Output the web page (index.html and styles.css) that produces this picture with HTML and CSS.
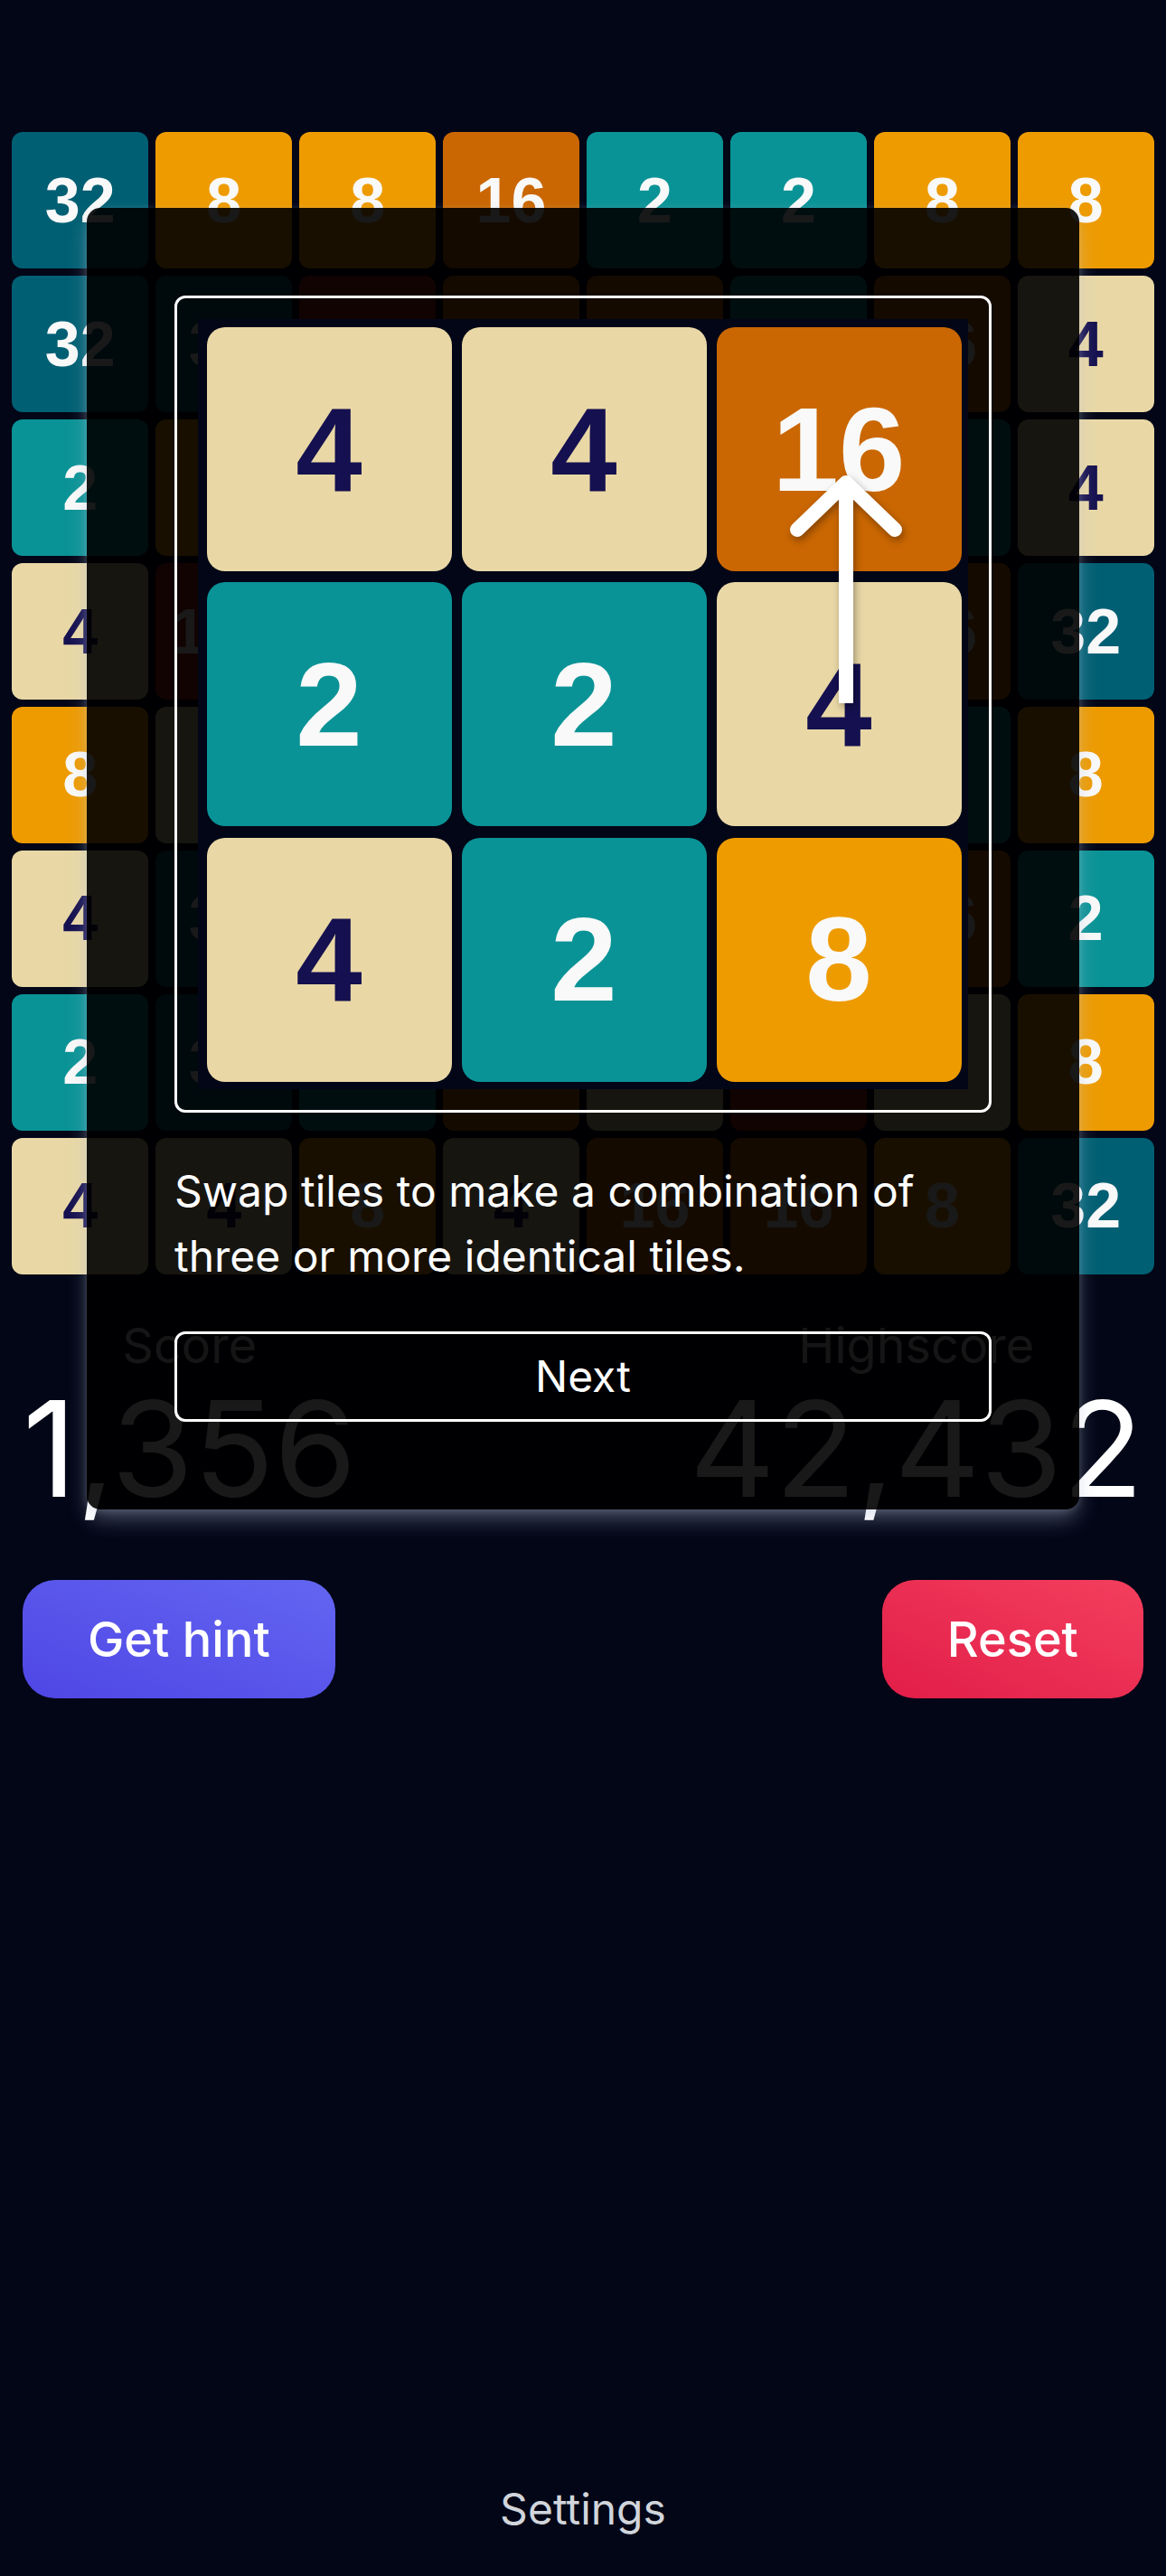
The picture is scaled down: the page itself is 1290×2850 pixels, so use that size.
FILE: index.html
```html
<!DOCTYPE html>
<html lang="en">
<head>
<meta charset="utf-8">
<title>Tiles</title>
<link rel="stylesheet" href="styles.css">
</head>
<body>
<div class="page">
  <div class="board">
    <div class="tile t32">32</div><div class="tile t8">8</div><div class="tile t8">8</div><div class="tile t16">16</div><div class="tile t2">2</div><div class="tile t2">2</div><div class="tile t8">8</div><div class="tile t8">8</div>
    <div class="tile t32">32</div><div class="tile t32">32</div><div class="tile t128">128</div><div class="tile t16">16</div><div class="tile t16">16</div><div class="tile t2">2</div><div class="tile t16">16</div><div class="tile t4">4</div>
    <div class="tile t2">2</div><div class="tile t8">8</div><div class="tile t4">4</div><div class="tile t2">2</div><div class="tile t4">4</div><div class="tile t8">8</div><div class="tile t2">2</div><div class="tile t4">4</div>
    <div class="tile t4">4</div><div class="tile t128">128</div><div class="tile t2">2</div><div class="tile t4">4</div><div class="tile t8">8</div><div class="tile t2">2</div><div class="tile t16">16</div><div class="tile t32">32</div>
    <div class="tile t8">8</div><div class="tile t4">4</div><div class="tile t2">2</div><div class="tile t8">8</div><div class="tile t4">4</div><div class="tile t2">2</div><div class="tile t2">2</div><div class="tile t8">8</div>
    <div class="tile t4">4</div><div class="tile t32">32</div><div class="tile t8">8</div><div class="tile t4">4</div><div class="tile t2">2</div><div class="tile t4">4</div><div class="tile t16">16</div><div class="tile t2">2</div>
    <div class="tile t2">2</div><div class="tile t32">32</div><div class="tile t2">2</div><div class="tile t16">16</div><div class="tile t4">4</div><div class="tile t128">128</div><div class="tile t4">4</div><div class="tile t8">8</div>
    <div class="tile t4">4</div><div class="tile t4">4</div><div class="tile t8">8</div><div class="tile t4">4</div><div class="tile t16">16</div><div class="tile t16">16</div><div class="tile t8">8</div><div class="tile t32">32</div>
  </div>

  <div class="scores">
    <div class="score">
      <div class="score-label">Score</div>
      <div class="score-value">1,356</div>
    </div>
    <div class="score">
      <div class="score-label">Highscore</div>
      <div class="score-value">42,432</div>
    </div>
  </div>

  <div class="actions">
    <button class="btn btn-hint">Get hint</button>
    <button class="btn btn-reset">Reset</button>
  </div>

  <button class="settings">Settings</button>

  <div class="tour">
    <div class="shot-frame">
      <div class="shot">
        <div class="tile t4">4</div><div class="tile t4">4</div><div class="tile t16">16</div>
        <div class="tile t2">2</div><div class="tile t2">2</div><div class="tile t4">4</div>
        <div class="tile t4">4</div><div class="tile t2">2</div><div class="tile t8">8</div>
        <svg class="arrow" width="852" height="852" viewBox="0 0 852 852" aria-hidden="true">
          <path d="M717 425 V186" fill="none" stroke="#fff" stroke-width="16"/>
          <path d="M663 233 L717 181 L771 233" fill="none" stroke="#fff" stroke-width="16" stroke-linecap="round" stroke-linejoin="round"/>
        </svg>
      </div>
    </div>
    <p class="tour-text">Swap tiles to make a combination of three or more identical tiles.</p>
    <button class="tour-next">Next</button>
  </div>
</div>
</body>
</html>
```

FILE: styles.css
```css
* { box-sizing: border-box; }
html, body { margin: 0; padding: 0; }
body {
  background: #020617;
  color: #fff;
  font-family: Inter, "Noto Sans", sans-serif;
}
.page {
  position: relative;
  min-height: 2850px;
  display: flex;
  flex-direction: column;
  padding: 146px 0 38px;
}
.board {
  display: grid;
  grid-template-columns: repeat(8, 1fr);
  gap: 7.5px;
  margin: 0 13px;
}
.tile {
  aspect-ratio: 1;
  border-radius: 12px;
  display: flex;
  align-items: center;
  justify-content: center;
  font-family: "Liberation Sans", Arial, sans-serif;
  font-weight: 700;
  font-size: 70px;
  color: #f9f9f9;
}
.t2 { background: #0a9396; }
.t4 { background: #e9d8a6; color: #15104f; }
.t8 { background: #ee9b00; }
.t16 { background: #ca6702; }
.t32 { background: #005f73; }
.t128 { background: #ae2012; }

.scores {
  display: flex;
  justify-content: space-between;
  padding: 0 25px;
  margin-top: 38px;
}
.score {
  display: flex;
  flex-direction: column;
  align-items: center;
}
.score-label {
  font-size: 54px;
  line-height: 81px;
  color: #d1d5db;
}
.score-value {
  font-size: 147px;
  line-height: 144px;
  margin-top: 2px;
}
.actions {
  display: flex;
  justify-content: space-between;
  padding: 0 25px;
  margin-top: 73px;
}
.btn {
  border: 0;
  border-radius: 36px;
  color: #fff;
  font-family: Inter, "Noto Sans", sans-serif;
  font-size: 54px;
  font-weight: 500;
  line-height: 81px;
  padding: 25px 72px;
}
.btn-hint { background: linear-gradient(to top right, #4f46e5, #6366f1); }
.btn-reset { background: linear-gradient(to top right, #e11d48, #f43f5e); }
.settings {
  margin-top: auto;
  align-self: center;
  background: none;
  border: 0;
  padding: 0;
  font-family: Inter, "Noto Sans", sans-serif;
  font-size: 48px;
  line-height: 72px;
  color: #d1d5db;
}

.tour {
  position: absolute;
  left: 96px;
  top: 230px;
  width: 1098px;
  padding: 97px;
  background: rgba(0, 0, 0, 0.9);
  border-radius: 15px;
  box-shadow: 0 12px 24px -2px rgba(190, 200, 220, 0.38), 0 2px 8px rgba(190, 200, 220, 0.2);
  z-index: 5;
}
.shot-frame {
  border: 3px solid #fff;
  border-radius: 12px;
  padding: 23px;
}
.shot {
  position: relative;
  width: 852px;
  height: 852px;
  background: #020617;
  display: grid;
  grid-template-columns: repeat(3, 271px);
  grid-template-rows: repeat(3, 270px);
  column-gap: 11px;
  row-gap: 12.4px;
  padding: 9px 0 0 9.5px;
}
.shot .tile {
  aspect-ratio: auto;
  border-radius: 20px;
  font-size: 132px;
}
.arrow {
  position: absolute;
  left: 0;
  top: 0;
  filter: drop-shadow(2px 4px 4px rgba(0, 0, 0, 0.35));
}
.tour-text {
  margin: 51px 0 0;
  font-size: 48px;
  line-height: 72px;
}
.tour-next {
  display: block;
  width: 100%;
  margin-top: 47px;
  border: 3px solid #fff;
  border-radius: 12px;
  background: transparent;
  color: #fff;
  font-family: Inter, "Noto Sans", sans-serif;
  font-size: 48px;
  line-height: 72px;
  padding: 11px 0;
}
```
